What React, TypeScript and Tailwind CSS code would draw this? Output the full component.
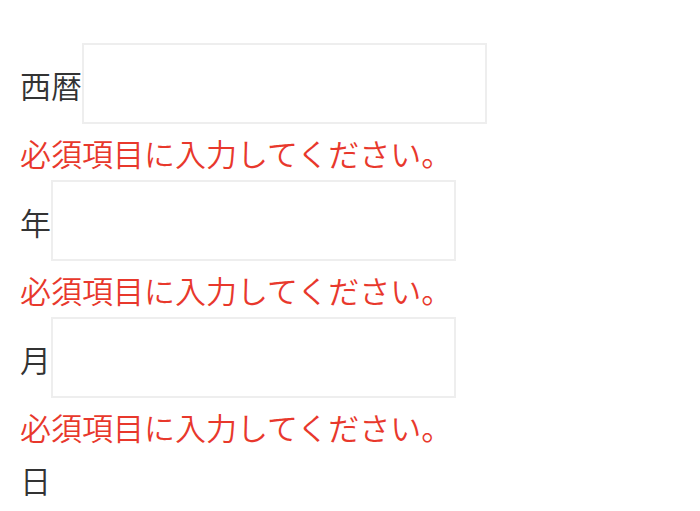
import React from 'react';

const jp = { fontFamily: '"Noto Sans CJK JP", "Noto Sans", sans-serif' };

const Field = ({ label, withInput = true }: { label: string; withInput?: boolean }) => {
  if (!withInput) {
    return <div className="text-[31px] leading-[52px] text-[#333]">{label}</div>;
  }
  return (
    <>
      <div className="flex items-center h-[81px]">
        <span className="text-[31px] leading-none text-[#333] pt-[1px]">{label}</span>
        <input
          type="text"
          className="w-[405px] h-[81px] border-2 border-[#eeeeee] bg-white outline-none"
        />
      </div>
      <p className="text-[31px] leading-[56px] text-[#e8382c] -mb-[1px] pt-[1px]">必須項目に入力してください。</p>
    </>
  );
};

export default function App() {
  return (
    <div className="w-[700px] h-[511px] overflow-hidden bg-white pl-[20px] pt-[43px] font-[350]" style={jp}>
      <Field label="西暦" />
      <Field label="年" />
      <Field label="月" />
      <Field label="日" withInput={false} />
    </div>
  );
}
